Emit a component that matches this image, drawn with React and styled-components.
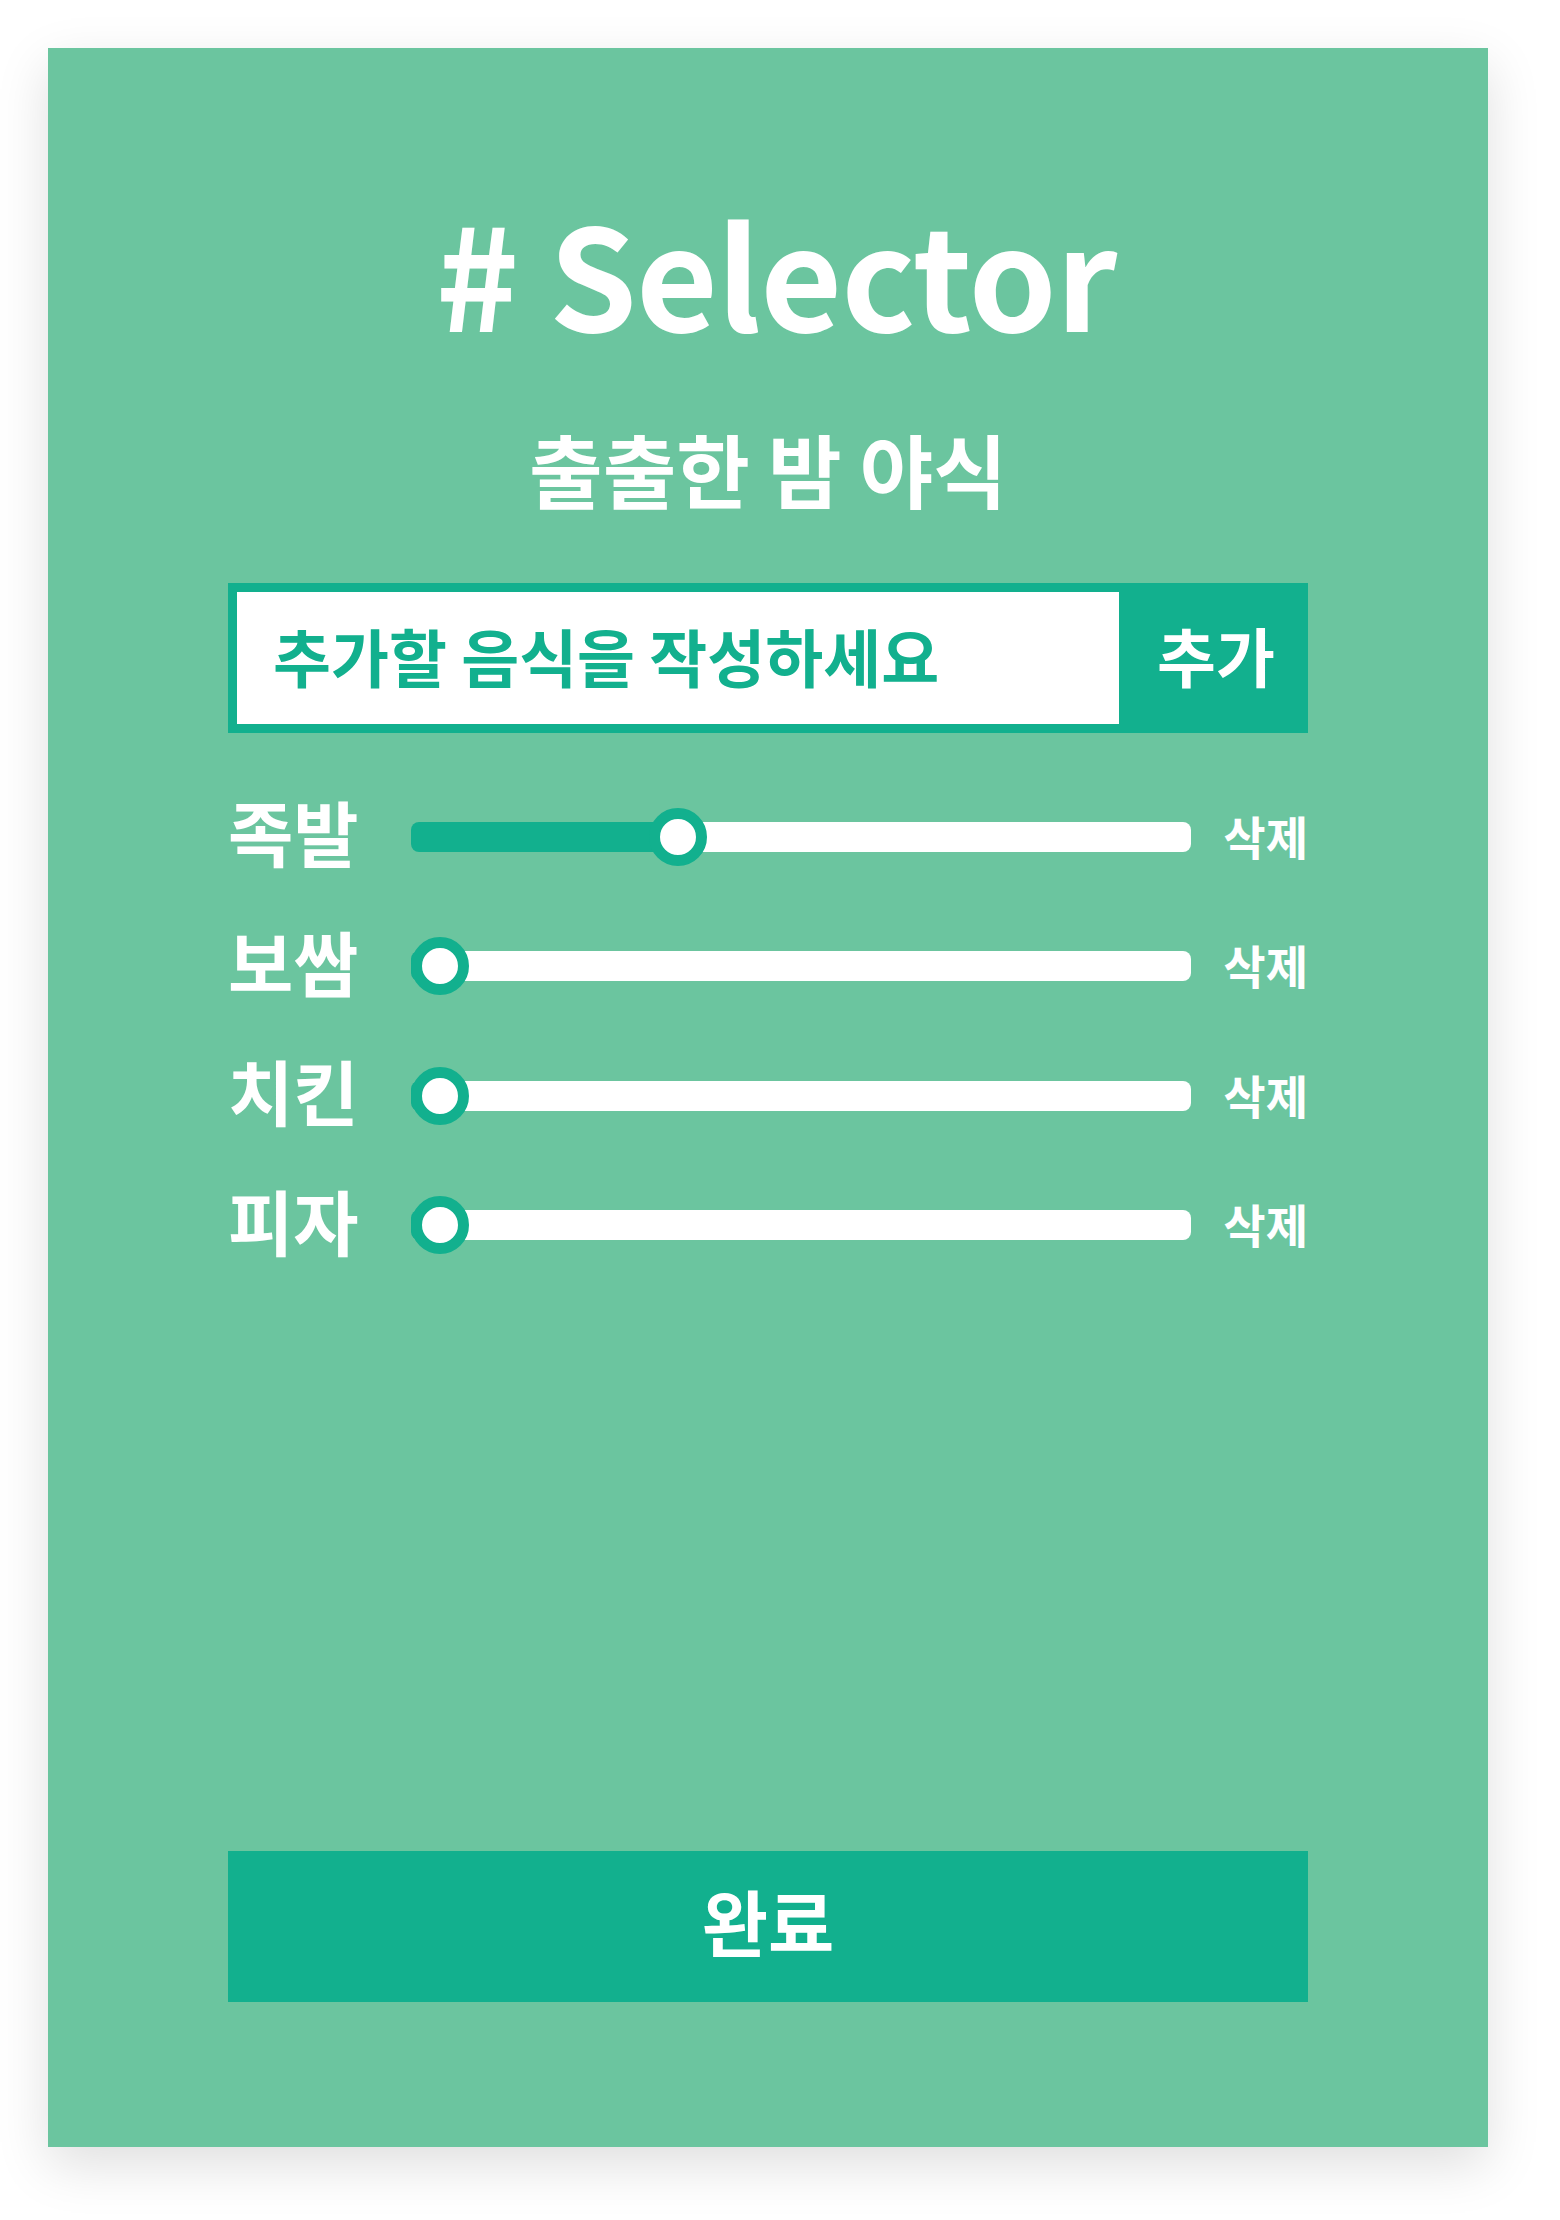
import React, { useState } from "react";
import styled, { createGlobalStyle } from "styled-components";

const TEAL = "#12b08e";
const GREEN = "#6bc59f";
const FONT = `"Noto Sans CJK KR", "Noto Sans", sans-serif`;

const Global = createGlobalStyle`
  html, body { margin: 0; padding: 0; background: #ffffff; }
  body { font-family: ${FONT}; }
  * { box-sizing: border-box; }
`;

const Page = styled.div`
  padding: 48px 72px 73px 48px;
  width: 1560px;
`;

const Card = styled.section`
  width: 1440px;
  height: 2099px;
  background: ${GREEN};
  box-shadow: 0 18px 50px rgba(0, 0, 0, 0.13);
  padding: 152px 180px 145px;
  display: flex;
  flex-direction: column;
`;

const Title = styled.h1`
  margin: 0;
  padding-left: 16px;
  font-family: ${FONT};
  font-weight: 700;
  font-size: 141px;
  line-height: 1;
  color: #ffffff;
  text-align: center;
  letter-spacing: -1px;
`;

const Subtitle = styled.h2`
  margin: 86px 0 0;
  font-family: ${FONT};
  font-weight: 700;
  font-size: 80px;
  line-height: 1;
  color: #ffffff;
  text-align: center;
`;

const AddForm = styled.form`
  margin: 76px 0 0;
  height: 150px;
  display: flex;
  border: 9px solid ${TEAL};
  background: ${TEAL};
`;

const TextInput = styled.input`
  flex: 1;
  min-width: 0;
  border: none;
  outline: none;
  background: #ffffff;
  padding: 0 0 8px 36px;
  font-family: ${FONT};
  font-weight: 700;
  font-size: 63px;
  color: ${TEAL};
  &::placeholder { color: ${TEAL}; opacity: 1; }
`;

const AddButton = styled.button`
  width: 180px;
  border: none;
  background: ${TEAL};
  color: #ffffff;
  font-family: ${FONT};
  font-weight: 700;
  font-size: 64px;
  padding: 0 0 8px 14px;
  cursor: pointer;
`;

const List = styled.ul`
  list-style: none;
  margin: 62px 0 0;
  padding: 0;
  display: flex;
  flex-direction: column;
  gap: 71.6px;
`;

const Row = styled.li`
  display: grid;
  grid-template-columns: 183px 780px 1fr;
  align-items: center;
  height: 58px;
`;

const Label = styled.span`
  font-family: ${FONT};
  font-weight: 700;
  font-size: 71px;
  line-height: 1;
  padding-bottom: 12px;
  color: #ffffff;
  white-space: nowrap;
`;

const Range = styled.input`
  -webkit-appearance: none;
  appearance: none;
  width: 780px;
  height: 60px;
  margin: 0;
  background: transparent;
  outline: none;
  overflow: visible;
  &::-webkit-slider-runnable-track {
    height: 30px;
    border-radius: 8px;
    background: var(--track);
  }
  &::-webkit-slider-thumb {
    -webkit-appearance: none;
    appearance: none;
    box-sizing: border-box;
    width: 58px;
    height: 58px;
    margin-top: -14px;
    border-radius: 50%;
    background: #ffffff;
    border: 11px solid ${TEAL};
  }
`;

const DeleteButton = styled.button`
  justify-self: end;
  border: none;
  background: none;
  padding: 0 0 4px;
  font-family: ${FONT};
  font-weight: 700;
  font-size: 46px;
  line-height: 1;
  color: #ffffff;
  cursor: pointer;
`;

const DoneButton = styled.button`
  margin-top: auto;
  height: 151px;
  border: none;
  background: ${TEAL};
  color: #ffffff;
  font-family: ${FONT};
  font-weight: 700;
  font-size: 72px;
  padding: 0 0 14px;
  cursor: pointer;
`;

const initial = [
  { name: "족발", value: 33 },
  { name: "보쌈", value: 0 },
  { name: "치킨", value: 0 },
  { name: "피자", value: 0 },
];

function FoodRow({ item, onChange, onDelete }) {
  const pct = item.value / 100;
  const stop = `calc(29px + ${pct} * 722px)`;
  return (
    <Row>
      <Label>{item.name}</Label>
      <Range
        type="range"
        min="0"
        max="100"
        value={item.value}
        onChange={(e) => onChange(Number(e.target.value))}
        style={{
          "--track": `linear-gradient(to right, ${TEAL} 0, ${TEAL} ${stop}, #ffffff ${stop}, #ffffff 100%)`,
        }}
      />
      <DeleteButton type="button" onClick={onDelete}>삭제</DeleteButton>
    </Row>
  );
}

export default function App() {
  const [items, setItems] = useState(initial);
  const [text, setText] = useState("");

  const add = (e) => {
    e.preventDefault();
    if (!text.trim()) return;
    setItems([...items, { name: text.trim(), value: 0 }]);
    setText("");
  };

  return (
    <>
      <Global />
      <Page>
        <Card>
          <Title># Selector</Title>
          <Subtitle>출출한 밤 야식</Subtitle>
          <AddForm onSubmit={add}>
            <TextInput
              placeholder="추가할 음식을 작성하세요"
              value={text}
              onChange={(e) => setText(e.target.value)}
            />
            <AddButton type="submit">추가</AddButton>
          </AddForm>
          <List>
            {items.map((it, i) => (
              <FoodRow
                key={it.name + i}
                item={it}
                onChange={(v) =>
                  setItems(items.map((x, j) => (j === i ? { ...x, value: v } : x)))
                }
                onDelete={() => setItems(items.filter((_, j) => j !== i))}
              />
            ))}
          </List>
          <DoneButton type="button">완료</DoneButton>
        </Card>
      </Page>
    </>
  );
}
